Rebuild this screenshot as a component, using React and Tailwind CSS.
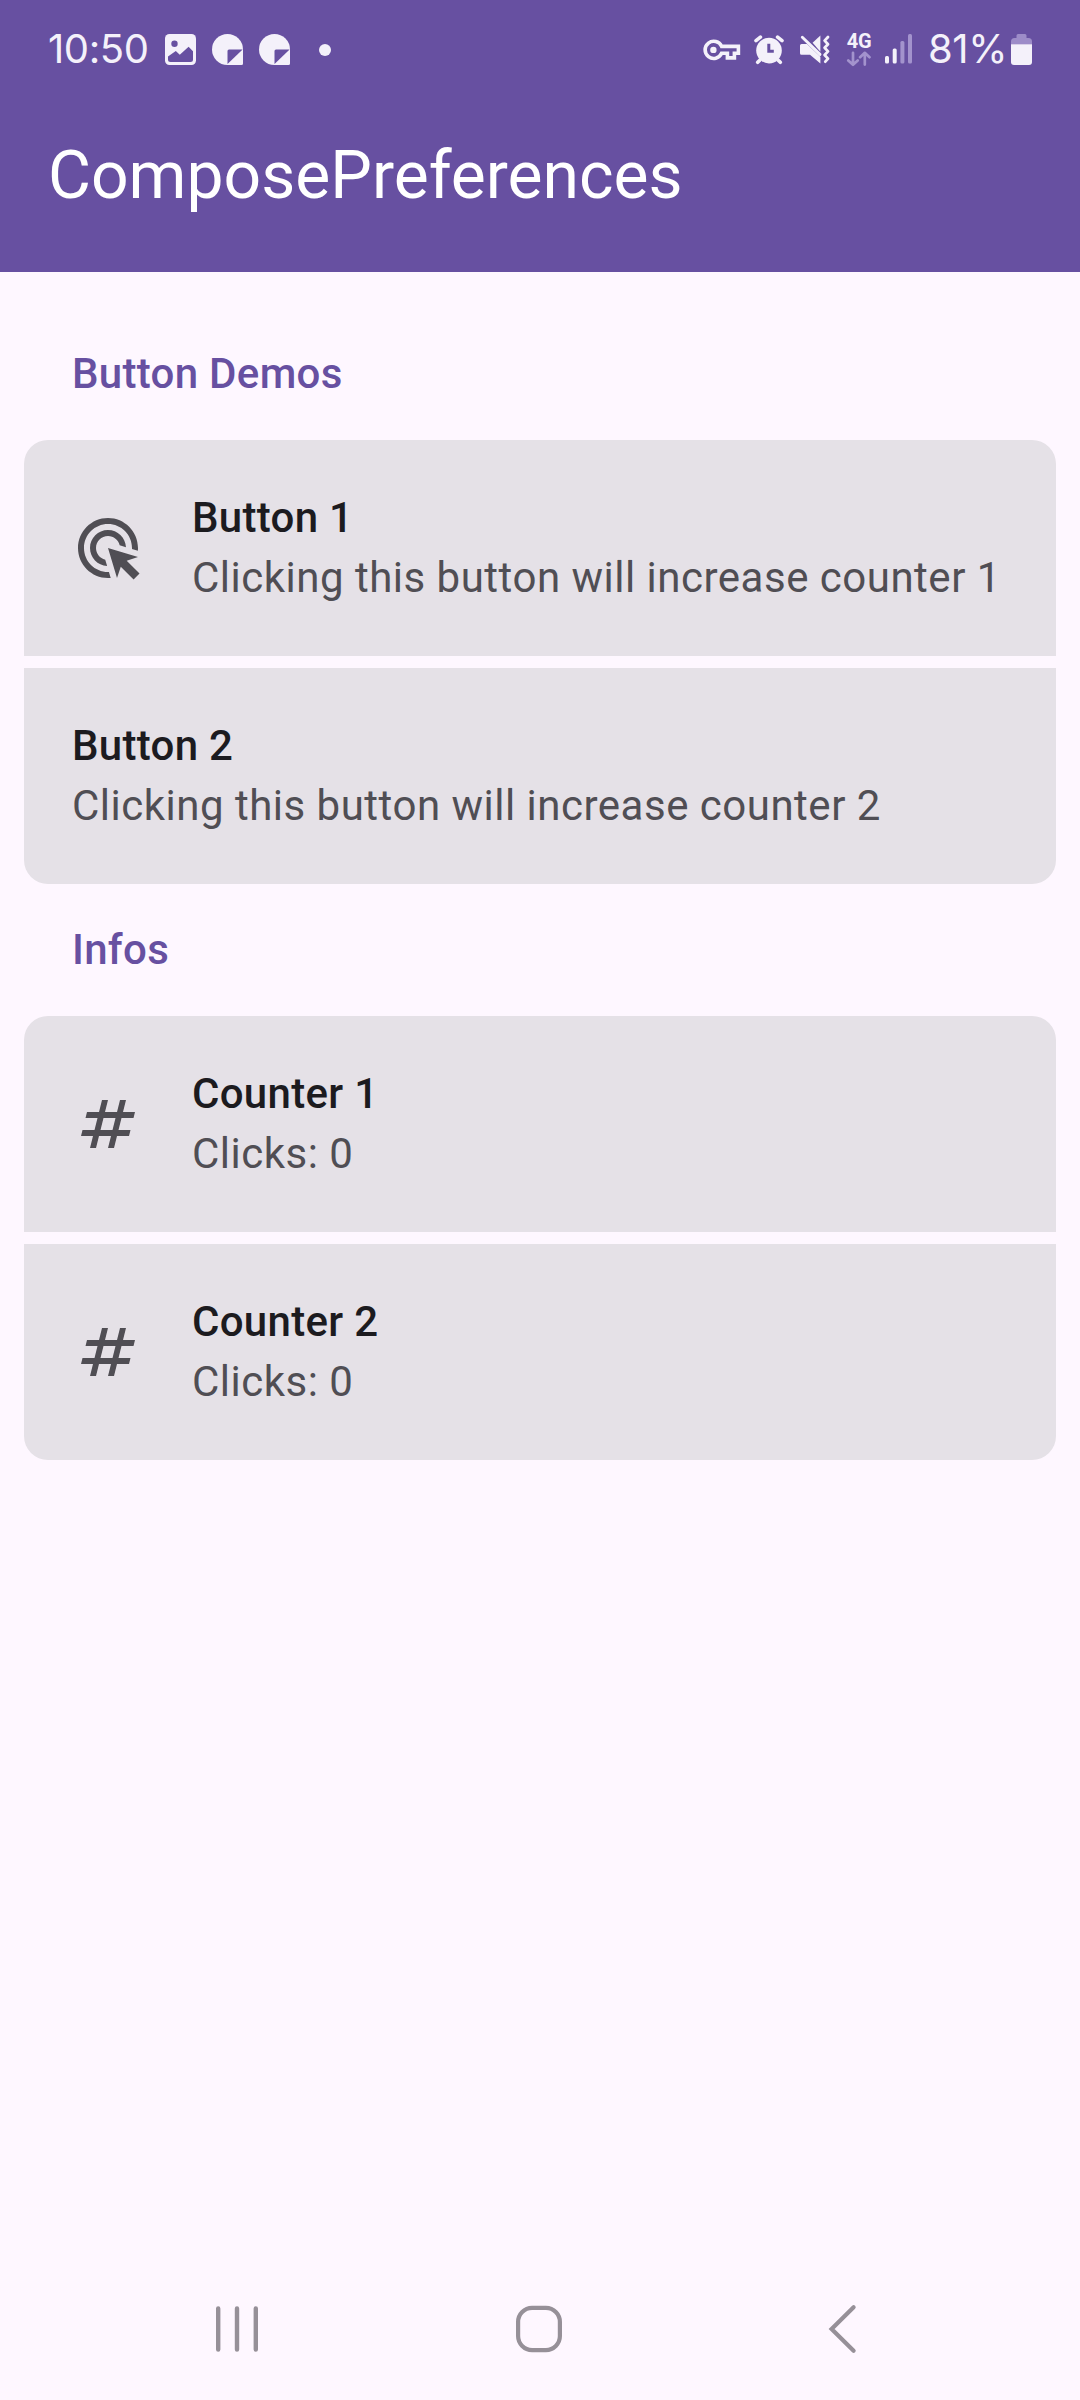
import React from "react";

const WHITE = "#f4f1fa";
const DIM = "#a393cd";
const PURPLE = "#6750a1";

function ImageIcon() {
  return (
    <svg className="ml-[17px] h-[31px] w-[31px]" viewBox="0 0 31 31">
      <rect width="31" height="31" rx="4.5" fill={WHITE} />
      <circle cx="9.5" cy="9.8" r="3.2" fill={PURPLE} />
      <path d="M3 22.5L10.8 17L14.8 20.7L23.6 12.8L28 17.3V25.5Q28 28 25.5 28H5.5Q3 28 3 25.5Z" fill={PURPLE} />
    </svg>
  );
}

function StickerIcon() {
  return (
    <svg className="ml-4 h-[31px] w-[31px]" viewBox="0 0 31 31">
      <path d="M15.5 0A15.5 15.5 0 0 1 31 15.5V29.5Q31 31 29.5 31H15.5A15.5 15.5 0 0 1 15.5 0Z" fill={WHITE} />
      <path d="M15.5 30V17Q15.5 15.5 17 15.5H30.6Z" fill={PURPLE} />
    </svg>
  );
}

function KeyIcon() {
  return (
    <svg className="h-[22px] w-[38px] shrink-0" viewBox="0 0 38 22" fill="none" stroke={WHITE}>
      <path d="M18.6 7.4H35.4V14.3H31.4V18.9H24.4V14.3H18.6A8.6 8.6 0 1 1 18.6 7.4Z" strokeWidth="3.6" />
      <circle cx="10.4" cy="10.9" r="3.2" fill={WHITE} stroke="none" />
    </svg>
  );
}

function AlarmIcon() {
  return (
    <svg className="ml-[13px] h-[30px] w-[30px] shrink-0" viewBox="0 0 30 30" fill="none" stroke={WHITE} strokeLinecap="round">
      <circle cx="15" cy="15.6" r="12.8" fill={WHITE} stroke="none" />
      <path d="M2 5.6L6.4 2.2M28 5.6L23.6 2.2M5.5 25.5L3.7 27.3M24.5 25.5L26.3 27.3" strokeWidth="3.6" />
      <path d="M14.8 8.8V16.3H19.8" stroke={PURPLE} strokeWidth="3" strokeLinecap="butt" />
    </svg>
  );
}

function MuteIcon() {
  return (
    <svg className="ml-4 h-[31px] w-[30px] shrink-0" viewBox="0 0 30 31" fill={WHITE}>
      <path d="M0 11.5Q0 10 1.5 10H7L20.4 22.8V29.5L10 20.8H1.5Q0 20.8 0 19.3Z" />
      <path d="M20.4 1.5V17.8L12.6 8.8Z" />
      <path d="M2.3 3.2L20 20.4" stroke={WHITE} strokeWidth="2.9" strokeLinecap="round" />
      <path d="M28 3L24.6 6.6L28 10.2L24.6 13.8L28 17.4L24.6 21L28 24.6L25.3 27.7" fill="none" stroke={WHITE} strokeWidth="2.8" strokeLinejoin="round" strokeLinecap="round" />
    </svg>
  );
}

function Network() {
  return (
    <div className="ml-4 flex w-[26px] shrink-0 flex-col items-center">
      <span className="h-4 text-[20px] leading-4 font-bold tracking-[-0.4px]">4G</span>
      <svg className="mt-0.5 h-4 w-[26px]" viewBox="0 0 26 16" fill="none" stroke={DIM} strokeWidth="2.7" strokeLinecap="round" strokeLinejoin="round">
        <path d="M7 1.8V13.5M2.3 9.4L7 13.8L11.7 9.4M18.8 13.6V2M14.1 6.2L18.8 1.8L23.5 6.2" />
      </svg>
    </div>
  );
}

function SignalIcon() {
  return (
    <svg className="ml-[13px] h-[31px] w-7 shrink-0" viewBox="0 0 28 31">
      <rect x="0" y="22" width="4" height="7.5" rx="1.5" fill={WHITE} />
      <rect x="7.7" y="14.5" width="4" height="15" rx="1.5" fill={WHITE} />
      <rect x="15.4" y="7" width="4" height="22.5" rx="1.5" fill={DIM} />
      <rect x="23" y="0" width="4" height="29.5" rx="1.5" fill={DIM} />
    </svg>
  );
}

function BatteryIcon() {
  return (
    <svg className="ml-auto h-[31px] w-[21px] shrink-0" viewBox="0 0 21 31">
      <path d="M0 10.5V7.5Q0 4 3.5 4H5.5V1.5Q5.5 0 7 0H14Q15.5 0 15.5 1.5V4H17.5Q21 4 21 7.5V10.5Z" fill="#9d8cc8" />
      <path d="M0 10.3H21V28Q21 31 18 31H3Q0 31 0 28Z" fill={WHITE} />
    </svg>
  );
}

function StatusBar() {
  return (
    <div className="flex h-[99px] items-center pr-12 pl-12 text-[#f4f1fa]">
      <span className="w-[100px] pb-0.5 text-[40px] leading-none font-[370] tracking-[-0.4px] whitespace-nowrap [font-family:Inter,sans-serif]">10:50</span>
      <ImageIcon />
      <StickerIcon />
      <StickerIcon />
      <span className="ml-[29px] h-3 w-3 rounded-full bg-[#f4f1fa]" />
      <div className="ml-auto flex w-[329px] items-center">
        <KeyIcon />
        <AlarmIcon />
        <MuteIcon />
        <Network />
        <SignalIcon />
        <span className="ml-[15px] w-[76px] pb-0.5 text-[40px] leading-none font-[370] tracking-[-0.4px] whitespace-nowrap [font-family:Inter,sans-serif]">81%</span>
        <BatteryIcon />
      </div>
    </div>
  );
}

function ClickIcon() {
  return (
    <svg className="h-[72px] w-[72px] shrink-0" viewBox="0 0 24 24" fill="currentColor">
      <path d="M11.71,17.99C8.53,17.84,6,15.22,6,12c0-3.31,2.69-6,6-6c3.22,0,5.84,2.53,5.99,5.71l-2.1-0.63C15.48,9.31,13.89,8,12,8c-2.21,0-4,1.79-4,4c0,1.89,1.31,3.48,3.08,3.89L11.71,17.99z M22,12c0,0.3-0.01,0.6-0.04,0.9l-1.97-0.59C20,12.21,20,12.1,20,12c0-4.42-3.58-8-8-8s-8,3.58-8,8s3.58,8,8,8c0.1,0,0.21,0,0.31-0.01l0.59,1.97C12.6,21.99,12.3,22,12,22C6.48,22,2,17.52,2,12C2,6.48,6.48,2,12,2S22,6.48,22,12z M18.23,16.26L22,15l-10-3l3,10l1.26-3.77l4.27,4.27l1.98-1.98L18.23,16.26z" />
    </svg>
  );
}

function HashIcon() {
  return (
    <svg className="h-[72px] w-[72px] shrink-0" viewBox="0 0 24 24" fill="currentColor">
      <path d="M20.5 10L21 8h-4l1-4h-2l-1 4h-4l1-4h-2L9 8H5l-.5 2h4l-1 4h-4L3 16h4l-1 4h2l1-4h4l-1 4h2l1-4h4l.5-2h-4l1-4H20.5zM13.5 14h-4l1-4h4L13.5 14z" />
    </svg>
  );
}

function Section({ title, items }) {
  return (
    <section>
      <h2 className="px-12 py-9 text-[42px] leading-[60px] font-medium tracking-[0.3px] text-[#6750a1]">{title}</h2>
      <div className="flex flex-col gap-3 overflow-hidden rounded-3xl">
        {items.map(({ name, detail, Icon }) => (
          <div key={name} className="flex h-[216px] items-center gap-12 bg-[#e5e1e7] px-12 text-[#504e54]">
            {Icon && <Icon />}
            <div className="text-[42px] leading-[60px] whitespace-nowrap">
              <div className="font-medium tracking-[0.3px] text-[#1c1b1f]">{name}</div>
              <div className="tracking-[0.5px]">{detail}</div>
            </div>
          </div>
        ))}
      </div>
    </section>
  );
}

function NavBar() {
  return (
    <nav className="mt-auto flex h-[142px] items-center pl-[214px]">
      <svg className="h-[50px] w-[46px]" viewBox="0 0 46 50" stroke="#969098" strokeWidth="4.4" strokeLinecap="round">
        <path d="M4.2 4.5V45.5M23 4.5V45.5M41.8 4.5V45.5" />
      </svg>
      <svg className="ml-[254px] h-[50px] w-[50px]" viewBox="0 0 50 50" fill="none" stroke="#969098" strokeWidth="4.2">
        <rect x="4.1" y="3.9" width="41.8" height="42.2" rx="14" />
      </svg>
      <svg className="ml-[262px] h-[50px] w-8" viewBox="0 0 32 50" fill="none" stroke="#969098" strokeWidth="4.2" strokeLinecap="round">
        <path d="M27.6 3.3L5.6 25L27.6 46.7" />
      </svg>
    </nav>
  );
}

export default function App() {
  return (
    <div className="flex h-[2400px] w-[1080px] flex-col bg-[#fef7ff] [font-family:Roboto,sans-serif]">
      <header className="h-[272px] bg-[#6750a1]">
        <StatusBar />
        <h1 className="pt-[35px] pl-12 text-[66px] leading-[84px] font-normal text-white">ComposePreferences</h1>
      </header>
      <main className="px-6 pt-9">
        <Section
          title="Button Demos"
          items={[
            { name: "Button 1", detail: "Clicking this button will increase counter 1", Icon: ClickIcon },
            { name: "Button 2", detail: "Clicking this button will increase counter 2" },
          ]}
        />
        <Section
          title="Infos"
          items={[
            { name: "Counter 1", detail: "Clicks: 0", Icon: HashIcon },
            { name: "Counter 2", detail: "Clicks: 0", Icon: HashIcon },
          ]}
        />
      </main>
      <NavBar />
    </div>
  );
}
